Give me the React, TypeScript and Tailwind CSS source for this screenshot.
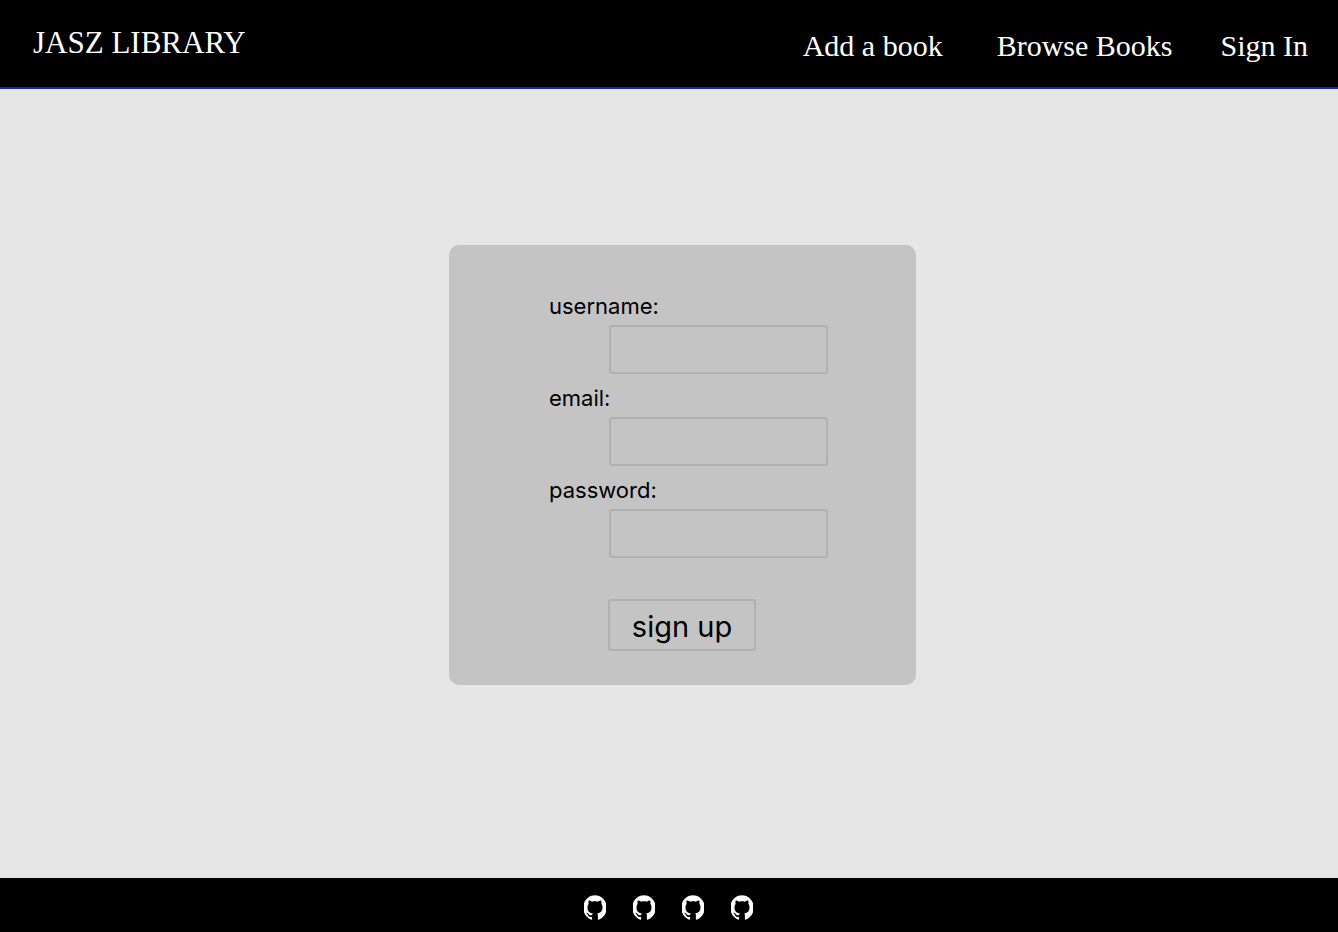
import { SiGithub } from "react-icons/si";

const fields = [
  { id: "username", label: "username:", type: "text" },
  { id: "email", label: "email:", type: "email" },
  { id: "password", label: "password:", type: "password" },
];

const profiles = ["First", "Second", "Third", "Fourth"];

function Header() {
  return (
    <header className="flex h-[89px] items-center justify-between border-b-2 border-[#1d22c4] bg-black pr-[30px] pl-[33px] font-['Liberation_Serif',serif] text-white">
      <a href="#home" className="pb-0.5 text-[31px] leading-8">
        JASZ LIBRARY
      </a>
      <nav className="flex items-center pt-1 text-[30px] leading-8">
        <a href="#add" className="mr-[54px]">Add a book</a>
        <a href="#browse" className="mr-12">Browse Books</a>
        <a href="#signin">Sign In</a>
      </nav>
    </header>
  );
}

function SignUpForm() {
  return (
    <form className="w-[467px] rounded-[10px] bg-[#c4c4c4] pt-[47px] pb-[34px] pl-[100px] font-[Inter,sans-serif] text-black">
      {fields.map((field) => (
        <div key={field.id} className="mb-[10px] flex flex-col">
          <label htmlFor={field.id} className="mb-[5px] self-start text-[22px] leading-7">
            {field.label}
          </label>
          <input
            id={field.id}
            type={field.type}
            className="ml-[60px] h-[49px] w-[219px] rounded-[3px] border-2 border-[#b0b0b0] bg-transparent px-3 text-lg outline-none"
          />
        </div>
      ))}
      <button
        type="button"
        className="mt-[41px] ml-[59px] block h-[52px] w-[148px] rounded-[3px] border-2 border-[#b0b0b0] pt-1 text-[29px] leading-8"
      >
        sign up
      </button>
    </form>
  );
}

function Footer() {
  return (
    <footer className="flex h-[54px] items-center justify-center gap-[27px] bg-black pt-1 pr-0.5 text-white">
      {profiles.map((name) => (
        <a key={name} href="#github" aria-label={`${name} GitHub profile`}>
          <SiGithub className="h-[25px] w-[22px]" viewBox="0.8 0 22.4 24" preserveAspectRatio="none" />
        </a>
      ))}
    </footer>
  );
}

export default function App() {
  return (
    <div className="flex min-h-screen flex-col bg-[#e6e6e6]">
      <Header />
      <main className="flex flex-1 items-center justify-center pb-[37px] pl-[27px]">
        <SignUpForm />
      </main>
      <Footer />
    </div>
  );
}
